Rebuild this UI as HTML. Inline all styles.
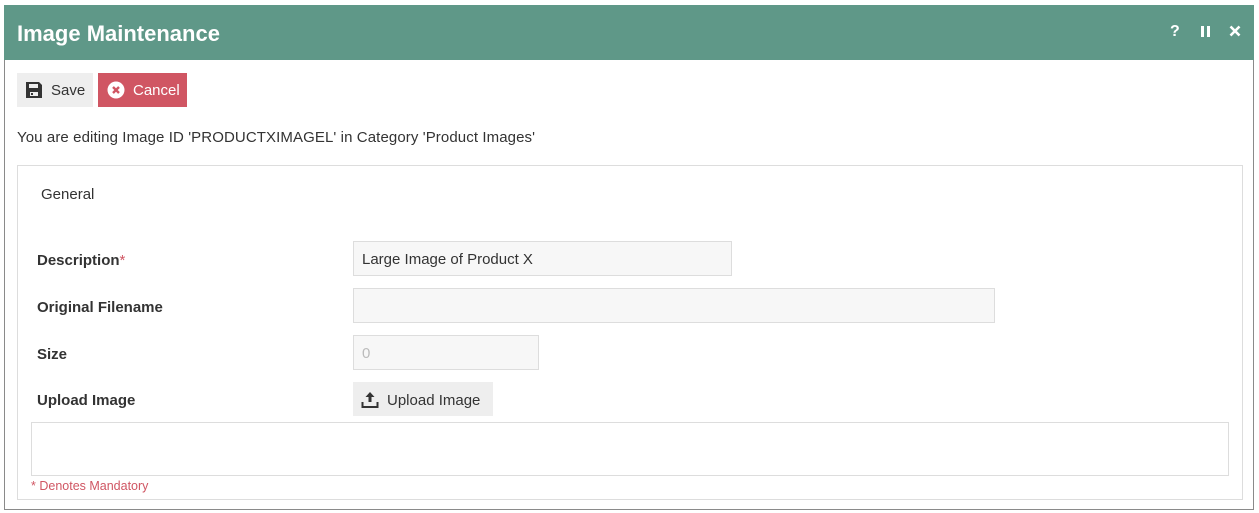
<!DOCTYPE html>
<html><head><style>
*{box-sizing:border-box;margin:0;padding:0}
body{width:1259px;height:513px;background:#fff;font-family:"Liberation Sans",sans-serif;color:#333;font-size:15px;position:relative;overflow:hidden}
.abs{position:absolute}
.outer{left:4px;top:5px;width:1250px;height:505px;border:1px solid #8a8a8a;border-top:none}
.hdr{left:4px;top:5px;width:1250px;height:55px;background:#5f9888;color:#fff}
.hdr .t{position:absolute;left:13px;top:16px;font-size:22px;font-weight:bold}
.btn{height:34px;display:flex;align-items:center;font-size:15px}
.lbl{left:37px;font-weight:bold;font-size:15px;color:#333}
.inp{background:#f7f7f7;border:1px solid #ddd;height:35px;font-size:15px;padding:9px 8px}
</style></head><body>
<div class="abs outer"></div>
<div class="abs hdr"><div class="t">Image Maintenance</div>
<div class="abs" style="left:1166px;top:18px;font-weight:bold;font-size:16px">?</div>
<div class="abs" style="left:1197px;top:21px;width:3px;height:11px;background:#fff"></div>
<div class="abs" style="left:1203px;top:21px;width:3px;height:11px;background:#fff"></div>
<svg class="abs" style="left:1225px;top:20px" width="12" height="12"><path d="M1.5 1.5L10.5 10.5M10.5 1.5L1.5 10.5" stroke="#fff" stroke-width="2.6"/></svg>
</div>
<div class="abs btn" style="left:17px;top:73px;width:76px;background:#eee;padding-left:9px">
<svg width="16" height="16" viewBox="0 0 16 16"><path d="M0 0H13L16 3V16H0Z" fill="#333"/><rect x="3" y="2" width="9" height="4" fill="#eee"/><rect x="4" y="10" width="8" height="4" fill="#eee"/><rect x="5" y="11" width="2" height="2" fill="#333"/></svg>
<span style="margin-left:9px">Save</span></div>
<div class="abs btn" style="left:98px;top:73px;width:89px;background:#d05663;color:#fff;padding-left:9px">
<svg width="18" height="18" viewBox="0 0 18 18"><circle cx="9" cy="9" r="8.5" fill="#fff"/><path d="M6 6L12 12M12 6L6 12" stroke="#d05663" stroke-width="2.4"/></svg>
<span style="margin-left:8px">Cancel</span></div>
<div class="abs" style="left:17px;top:129px;font-size:15px;letter-spacing:0.1px">You are editing Image ID 'PRODUCTXIMAGEL' in Category 'Product Images'</div>
<div class="abs" style="left:17px;top:165px;width:1226px;height:335px;border:1px solid #ddd"></div>
<div class="abs" style="left:41px;top:186px">General</div>
<div class="abs lbl" style="top:252px">Description<span style="color:#d05663;font-weight:normal">*</span></div>
<div class="abs lbl" style="top:299px">Original Filename</div>
<div class="abs lbl" style="top:346px">Size</div>
<div class="abs lbl" style="top:392px">Upload Image</div>
<div class="abs inp" style="left:353px;top:241px;width:379px">Large Image of Product X</div>
<div class="abs inp" style="left:353px;top:288px;width:642px"></div>
<div class="abs inp" style="left:353px;top:335px;width:186px;color:#bbb">0</div>
<div class="abs btn" style="left:353px;top:382px;width:140px;background:#eee;padding-left:8px;padding-top:2px">
<svg width="18" height="18" viewBox="0 0 18 18"><path d="M9 1L4.5 6H7.5V11H10.5V6H13.5Z" fill="#333"/><path d="M1.5 11V16H16.5V11" stroke="#333" stroke-width="2" fill="none"/></svg>
<span style="margin-left:8px">Upload Image</span></div>
<div class="abs" style="left:31px;top:422px;width:1198px;height:54px;border:1px solid #ddd"></div>
<div class="abs" style="left:31px;top:479px;font-size:12.5px;color:#d05663">* Denotes Mandatory</div>
</body></html>
